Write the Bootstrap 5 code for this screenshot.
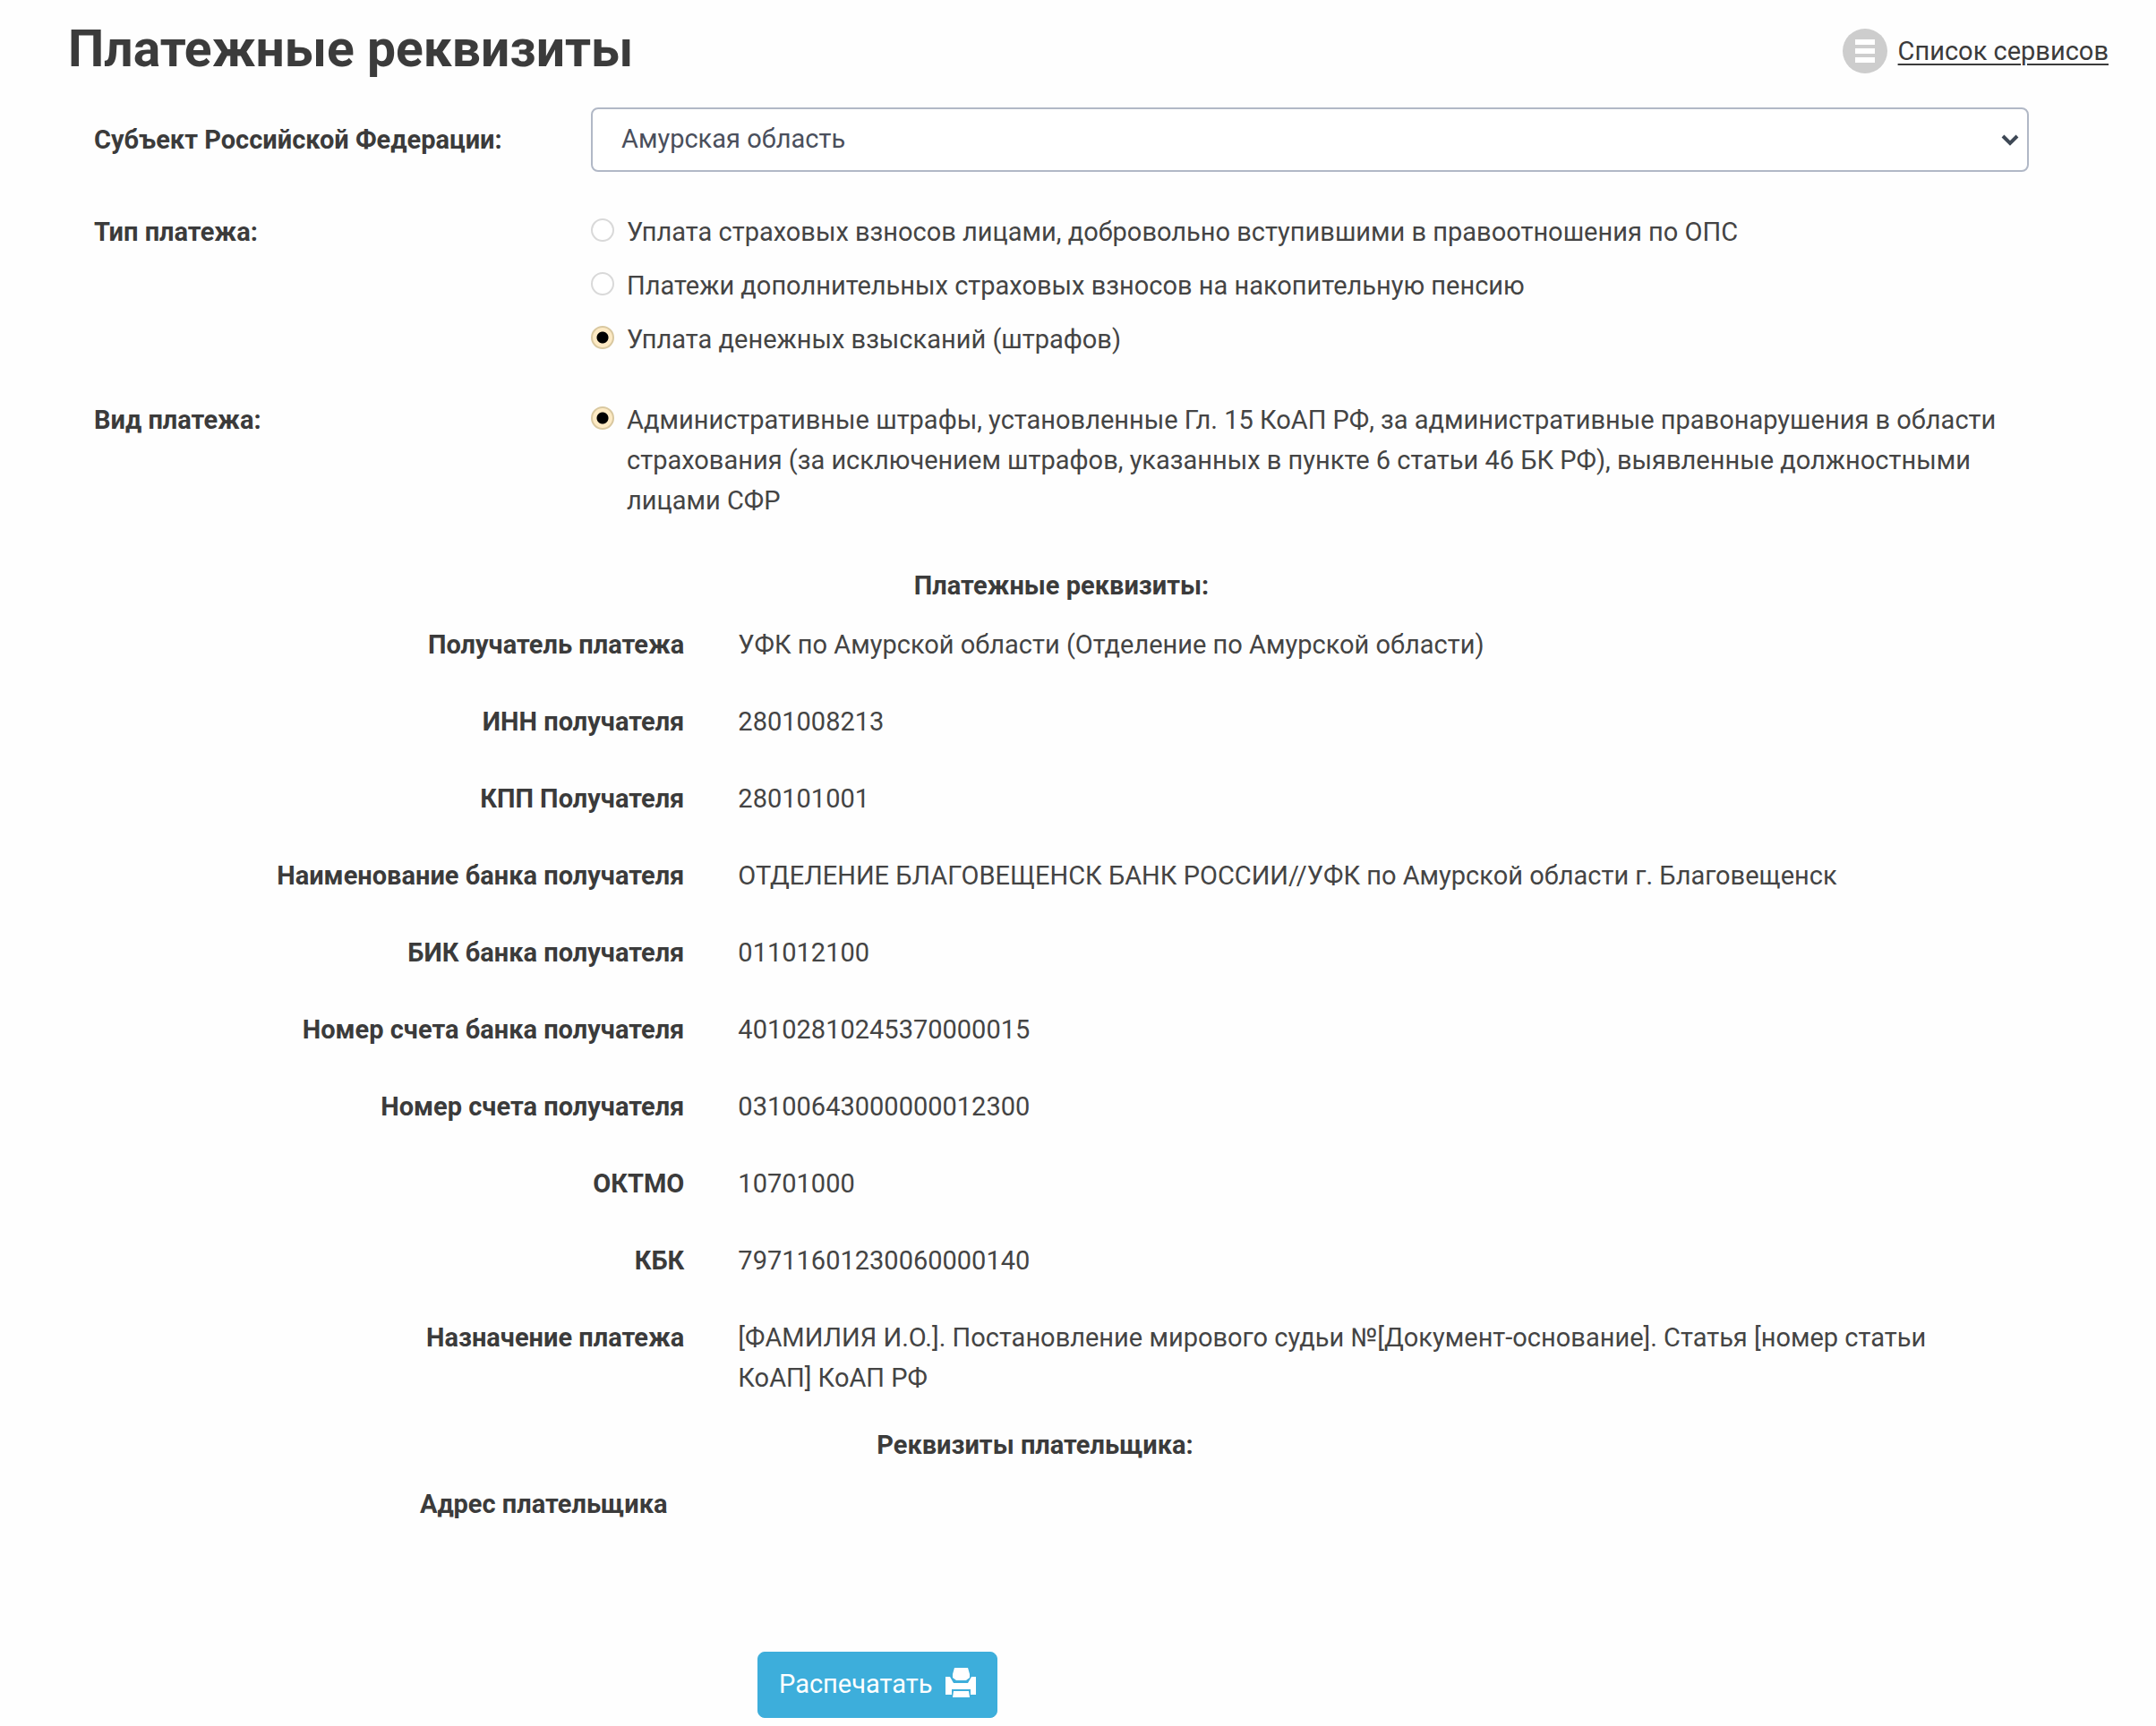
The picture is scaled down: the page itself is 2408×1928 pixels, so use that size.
<!DOCTYPE html>
<html lang="ru">
<head>
<meta charset="utf-8">
<meta name="viewport" content="width=device-width, initial-scale=1">
<title>Платежные реквизиты</title>
<link href="https://cdn.jsdelivr.net/npm/bootstrap@5.3.0/dist/css/bootstrap.min.css" rel="stylesheet">
<style>
  body { font-family: Roboto, "Noto Sans", sans-serif; font-size: 29px; line-height: 45px; color: #444; background: #fefefe; }
  .page-head { padding: 11px 53px 17px 76px; }
  .page-title { font-size: 57px; line-height: 88px; font-weight: 700; color: #3b3b3b; }
  .services { color: #3b3b3b; gap: 12px; height: 92px; }
  .services svg { width: 50px; height: 50px; }
  .services span { text-decoration: underline; text-decoration-thickness: 2px; text-underline-offset: 4px; }
  .pay-form { padding-left: 105px; padding-right: 83px; }
  .field-name { font-weight: 700; color: #3b3b3b; }
  .field-body { padding-right: 59px; }
  .region-row { margin-bottom: 45px; }
  .kind-row { margin-top: 45px; }
  .region { height: 72px; padding: 0 40px 0 32px; border: 2px solid #b1b8c6; border-radius: 8px; background-color: #fff; color: #4a4f5c; font-size: 29px;
    background-image: url("data:image/svg+xml,%3Csvg xmlns='http://www.w3.org/2000/svg' viewBox='0 0 20 14'%3E%3Cpath d='M2 3l8 8 8-8' fill='none' stroke='%233f4956' stroke-width='4'/%3E%3C/svg%3E");
    background-size: 20px 14px; background-position: right 9px center; }
  .choices { gap: 15px; }
  .choice { gap: 14px; }
  .choice input { appearance: none; flex: none; width: 26px; height: 26px; margin: 7px 0 0; border: 2px solid #d9d9d9; border-radius: 50%; background: #fff; }
  .choice input:checked { border-color: #d9c8a0; background: radial-gradient(circle, #000 6px, #fdeac4 7px); }
  .details { width: 100%; }
  .details caption { caption-side: top; padding: 0 0 21px; text-align: center; font-weight: 700; color: #3b3b3b; }
  .details th, .details td { vertical-align: top; padding: 0 30px 41px; }
  .details th { width: 31.9%; padding-left: 0; text-align: right; color: #3b3b3b; }
  .details tr:last-child > * { padding-bottom: 30px; }
  .receiver { padding-right: 59px; margin-top: 50px; }
  .payer { padding-right: 118px; }
  .print-row { padding: 112px 0 10px 741px; }
  .print { --bs-btn-bg: #3daedb; --bs-btn-border-color: #3daedb; --bs-btn-color: #fff; --bs-btn-hover-bg: #2f9dca; --bs-btn-hover-color: #fff;
    height: 74px; padding: 0 23px; border-radius: 8px; font-size: 29px; gap: 14px; }
  .print svg { width: 34px; height: 33px; margin-bottom: 6px; }
</style>
</head>
<body>
<header class="page-head d-flex justify-content-between align-items-start">
  <h1 class="page-title m-0">Платежные реквизиты</h1>
  <a href="#" class="services d-flex align-items-center text-decoration-none">
    <svg viewBox="0 0 50 50" aria-hidden="true"><circle cx="25" cy="25" r="25" fill="#cdcdcd"/><path d="M14 12h22v6H14zM14 22h22v6H14zM14 32h22v6H14z" fill="#fff"/></svg>
    <span>Список сервисов</span>
  </a>
</header>
<main>
  <form class="pay-form">
    <div class="row g-0 align-items-center region-row">
      <label class="col-3 field-name" for="region">Субъект Российской Федерации:</label>
      <div class="col-9 field-body">
        <select id="region" class="form-select region"><option>Амурская область</option></select>
      </div>
    </div>
    <div class="row g-0" role="radiogroup" aria-labelledby="type-name">
      <div class="col-3 field-name" id="type-name">Тип платежа:</div>
      <div class="col-9 field-body choices d-flex flex-column">
        <label class="choice d-flex"><input type="radio" name="type"><span>Уплата страховых взносов лицами, добровольно вступившими в правоотношения по ОПС</span></label>
        <label class="choice d-flex"><input type="radio" name="type"><span>Платежи дополнительных страховых взносов на накопительную пенсию</span></label>
        <label class="choice d-flex"><input type="radio" name="type" checked><span>Уплата денежных взысканий (штрафов)</span></label>
      </div>
    </div>
    <div class="row g-0 kind-row" role="radiogroup" aria-labelledby="kind-name">
      <div class="col-3 field-name" id="kind-name">Вид платежа:</div>
      <div class="col-9 field-body">
        <label class="choice d-flex"><input type="radio" name="kind" checked><span>Административные штрафы, установленные Гл. 15 КоАП РФ, за административные правонарушения в области страхования (за исключением штрафов, указанных в пункте 6 статьи 46 БК РФ), выявленные должностными лицами СФР</span></label>
      </div>
    </div>
    <div class="receiver">
      <table class="details">
        <caption>Платежные реквизиты:</caption>
        <tbody>
          <tr><th scope="row">Получатель платежа</th><td>УФК по Амурской области (Отделение по Амурской области)</td></tr>
          <tr><th scope="row">ИНН получателя</th><td>2801008213</td></tr>
          <tr><th scope="row">КПП Получателя</th><td>280101001</td></tr>
          <tr><th scope="row">Наименование банка получателя</th><td>ОТДЕЛЕНИЕ БЛАГОВЕЩЕНСК БАНК РОССИИ//УФК по Амурской области г. Благовещенск</td></tr>
          <tr><th scope="row">БИК банка получателя</th><td>011012100</td></tr>
          <tr><th scope="row">Номер счета банка получателя</th><td>40102810245370000015</td></tr>
          <tr><th scope="row">Номер счета получателя</th><td>03100643000000012300</td></tr>
          <tr><th scope="row">ОКТМО</th><td>10701000</td></tr>
          <tr><th scope="row">КБК</th><td>79711601230060000140</td></tr>
          <tr><th scope="row">Назначение платежа</th><td>[ФАМИЛИЯ И.О.]. Постановление мирового судьи №[Документ-основание]. Статья [номер статьи КоАП] КоАП РФ</td></tr>
        </tbody>
      </table>
    </div>
    <div class="payer">
      <table class="details">
        <caption>Реквизиты плательщика:</caption>
        <tbody><tr><th scope="row">Адрес плательщика</th><td></td></tr></tbody>
      </table>
    </div>
    <div class="print-row">
      <button type="button" class="btn print d-inline-flex align-items-center">Распечатать
        <svg viewBox="0 0 34 33" aria-hidden="true" fill="#fff"><path d="M10 0h15l2 7v4l-4 3H12l-4-3V7z"/><path d="M0 10h5l4 7h16l4-7h5v20h-6v-6H7v6H0z"/><path d="M9 26h17l1 7H8z"/></svg>
      </button>
    </div>
  </form>
</main>
<script src="https://cdn.jsdelivr.net/npm/bootstrap@5.3.0/dist/js/bootstrap.bundle.min.js"></script>
</body>
</html>
